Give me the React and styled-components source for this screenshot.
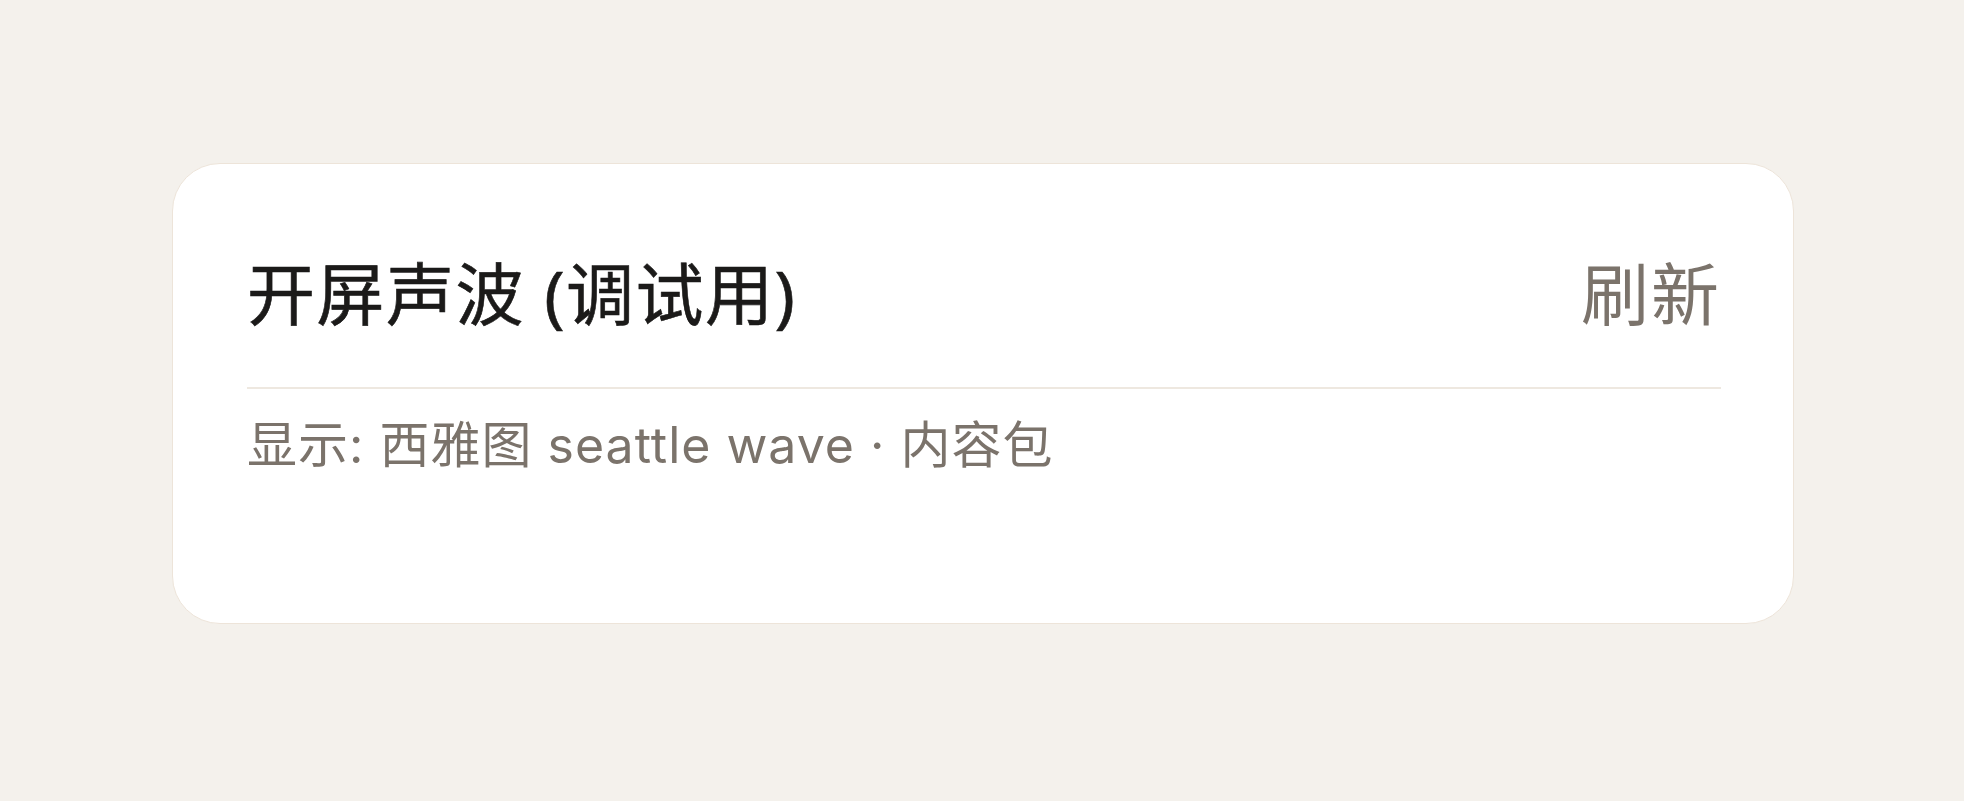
import React from "react";
import styled, { createGlobalStyle } from "styled-components";

const GlobalStyle = createGlobalStyle`
  html, body {
    margin: 0;
    padding: 0;
    background: #f4f1ec;
  }
  body {
    font-family: "Noto Sans", "Noto Sans CJK SC", sans-serif;
  }
`;

const Page = styled.div`
  min-height: 801px;
  box-sizing: border-box;
  padding: 163px 170px 0 172px;
`;

const Card = styled.section`
  box-sizing: border-box;
  height: 461px;
  background: #ffffff;
  border: 1.5px solid #ede4d9;
  border-radius: 48px;
  padding: 95px 72px 0 74px;
`;

const Header = styled.div`
  display: flex;
  justify-content: space-between;
  align-items: center;
  padding-bottom: 58px;
  border-bottom: 2px solid #eee8e0;
`;

const Title = styled.h1`
  margin: 0;
  font-size: 68px;
  line-height: 70px;
  font-weight: 400;
  letter-spacing: 1.5px;
  color: #1b1a19;
  -webkit-text-stroke: 0.6px #1b1a19;
`;

const Action = styled.button`
  border: 0;
  background: none;
  padding: 0;
  font-family: inherit;
  font-size: 68px;
  line-height: 70px;
  letter-spacing: 2px;
  color: #7b736b;
  cursor: pointer;
`;

const Detail = styled.p`
  margin: 30px 0 0;
  font-family: Inter, "Noto Sans CJK SC", sans-serif;
  font-size: 50px;
  line-height: 52px;
  letter-spacing: 1px;
  color: #7b736b;
`;

export default function App() {
  return (
    <>
      <GlobalStyle />
      <Page>
        <Card>
          <Header>
            <Title>开屏声波 (调试用)</Title>
            <Action>刷新</Action>
          </Header>
          <Detail>显示: 西雅图 seattle wave · 内容包</Detail>
        </Card>
      </Page>
    </>
  );
}
